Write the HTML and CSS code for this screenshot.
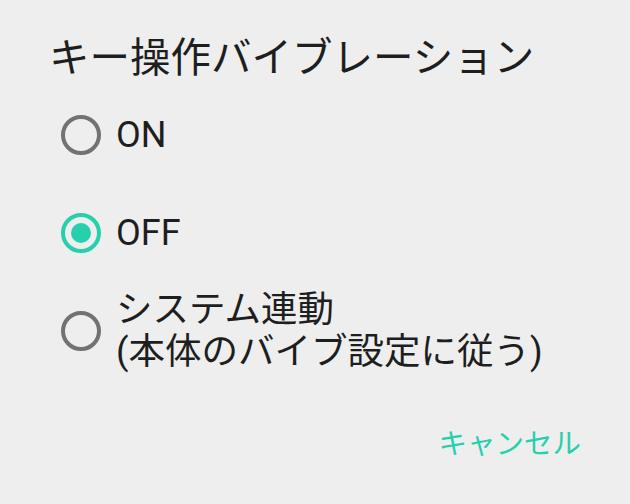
FILE: index.html
```html
<!DOCTYPE html>
<html lang="ja">
<head>
<meta charset="utf-8">
<link rel="stylesheet" href="styles.css">
</head>
<body>
<div class="dialog">
  <div class="title">キー操作バイブレーション</div>
  <div class="options">
    <div class="option">
      <span class="radio"></span>
      <span class="label">ON</span>
    </div>
    <div class="option">
      <span class="radio checked"></span>
      <span class="label">OFF</span>
    </div>
    <div class="option">
      <span class="radio"></span>
      <span class="label multi">システム連動<br>(本体のバイブ設定に従う)</span>
    </div>
  </div>
  <div class="actions">
    <span class="button">キャンセル</span>
  </div>
</div>
</body>
</html>
```
FILE: styles.css
```css
html, body {
  margin: 0;
  padding: 0;
  background: #eeeeee;
}
body {
  width: 630px;
  height: 504px;
  overflow: hidden;
  font-family: Roboto, "Noto Sans CJK JP", sans-serif;
  color: #1e1e1e;
}
.dialog {
  display: flex;
  flex-direction: column;
}
.title {
  font-size: 40.5px;
  line-height: 48px;
  padding: 34px 0 0 49px;
  height: 52px;
}
.options {
  display: flex;
  flex-direction: column;
}
.option {
  display: flex;
  align-items: center;
  min-height: 98px;
  padding-left: 61px;
}
.radio {
  flex: none;
  width: 32px;
  height: 32px;
  border: 4px solid #727272;
  border-radius: 50%;
  position: relative;
  margin-right: 15px;
}
.radio.checked {
  border-color: #26d0ac;
}
.radio.checked::after {
  content: "";
  position: absolute;
  left: 6px;
  top: 6px;
  width: 20px;
  height: 20px;
  border-radius: 50%;
  background: #26d0ac;
}
.label {
  font-size: 36px;
  line-height: 42px;
}
.label.multi {
  font-size: 36.5px;
}
.actions {
  display: flex;
  justify-content: flex-end;
  padding: 45px 49px 0 0;
}
.button {
  font-size: 28.5px;
  line-height: 40px;
  color: #26d0ac;
}
```
